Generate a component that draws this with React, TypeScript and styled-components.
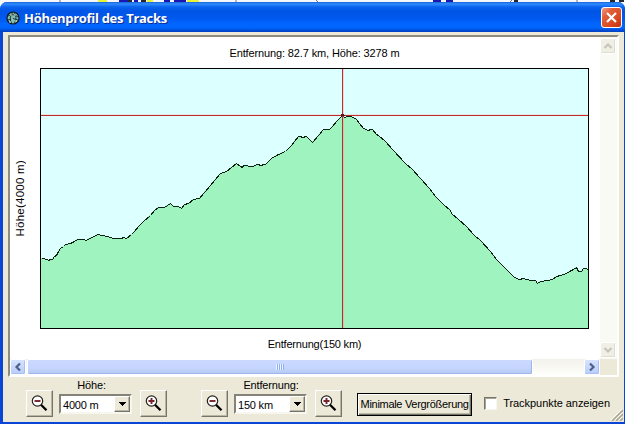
import React from "react";
import styled, { createGlobalStyle, css } from "styled-components";

const Global = createGlobalStyle`
  *, *::before, *::after { box-sizing: border-box; }
  body { margin: 0; overflow: hidden; background: #fff; }
  svg { display: block; flex: none; }
`;

const Screen = styled.div`
  width: 625px;
  height: 424px;
  display: flex;
  flex-direction: column;
  font: 11px/13px "Liberation Sans", Arial, sans-serif;
  color: #000;
`;

const Window = styled.div`
  flex: 1;
  display: flex;
  flex-direction: column;
  background: #0a45d8;
  border-radius: 7px 7px 0 0;
  overflow: hidden;
`;

const TitleBar = styled.header`
  height: 30px;
  flex: none;
  display: flex;
  align-items: center;
  padding: 1px 3px 0 6px;
  background: linear-gradient(#1b63d8 0, #2f8cff 2px, #0a62ee 5px, #0055e5 9px, #0058ee 16px, #0066ff 22px, #0065fb 26px, #0050dc 28px, #0040c0 30px);
`;

const Title = styled.h1`
  flex: 1;
  margin: 1px 0 0 4px;
  font: bold 13px/16px "Open Sans", "Noto Sans", sans-serif;
  letter-spacing: -0.3px;
  color: #fff;
  text-shadow: 1px 1px 0 #0a2f91;
`;

const CloseButton = styled.button`
  width: 21px;
  height: 21px;
  padding: 0;
  display: grid;
  place-items: center;
  border: 1px solid #fff;
  border-radius: 3px;
  background: linear-gradient(135deg, #f0a088 0, #e2603c 28%, #d9471f 70%, #b93410 100%);
`;

const Body = styled.main`
  flex: 1;
  display: flex;
  flex-direction: column;
  margin: 0 1px 2px 3px;
  padding: 3px 4px 0 5px;
  background: #ece9d8;
`;

const Frame = styled.section`
  width: 611px;
  height: 342px;
  flex: none;
  display: grid;
  grid-template: 322px 16px / 590px 17px;
  border: 2px solid;
  border-color: #8f8b7d #fff #fff #8f8b7d;
`;

const Plot = styled.div`
  display: grid;
  grid-template: 31px 261px 30px / 30px 549px;
  background: #fff;
`;

const Label = styled.span<{ $track?: number }>`
  white-space: pre;
  letter-spacing: ${(p) => p.$track ?? 0}px;
`;

const Caption = styled.div<{ $top: number }>`
  grid-column: 2;
  padding-top: ${(p) => p.$top}px;
  text-align: center;
`;

const AxisCell = styled.div`
  grid-column: 1;
  display: flex;
  justify-content: center;
  align-items: center;
  padding-right: 9px;
`;

const AxisLabel = styled(Label)`
  writing-mode: vertical-rl;
  transform: rotate(180deg);
  font-size: 11.5px;
`;

const VTrack = styled.div`
  display: flex;
  flex-direction: column;
  justify-content: space-between;
  padding: 1px 1px 1px 0;
  background: #fafaf5;
`;

const HTrack = styled.div`
  display: flex;
  background: linear-gradient(#f2f1ea, #fefefb);
`;

const ScrollButton = styled.button<{ $off?: boolean }>`
  width: 16px;
  height: 16px;
  flex: none;
  padding: 0;
  display: grid;
  place-items: center;
  border: 1px solid #fff;
  border-radius: 2px;
  ${(p) =>
    p.$off
      ? css`background: #f0efe5; box-shadow: inset -1px -1px #deddce; color: #c5c5b8;`
      : css`background: linear-gradient(#d5e1ff, #b9cdfb); box-shadow: inset -1px -1px #a8bff4; color: #4d6185;`}
`;

const Thumb = styled.div`
  width: 506px;
  height: 16px;
  margin-left: 1px;
  margin-right: auto;
  display: grid;
  place-items: center;
  border: 1px solid #fff;
  border-radius: 2px;
  background: linear-gradient(#cbd9ff, #c4d5fd 60%, #b3c8f5);
  box-shadow: inset -1px -1px #9fb6ec;
`;

const Grip = styled.div`
  width: 8px;
  height: 6px;
  background: repeating-linear-gradient(90deg, #eef4fe 0 1px, #8cb0f8 1px 2px);
`;

const Controls = styled.footer`
  flex: 1;
  display: flex;
  align-items: flex-start;
`;

const ZoomGroup = styled.div<{ $left: number }>`
  display: grid;
  grid-template: 13px 27px / 33px 81px 27px;
  margin-left: ${(p) => p.$left}px;
`;

const GroupName = styled.div<{ $inset: number }>`
  grid-column: 1 / -1;
  line-height: 16px;
  text-align: center;
  padding-right: ${(p) => p.$inset}px;
`;

const raised = css`
  border: 1px solid;
  border-color: #fff #77756a #77756a #fff;
  box-shadow: inset -1px -1px #b9b6a5;
  background: #ece9d8;
`;

const IconButton = styled.button`
  width: 27px;
  height: 27px;
  padding: 0;
  display: grid;
  place-items: center;
  ${raised}
`;

const Select = styled.div`
  width: 73px;
  height: 20px;
  align-self: end;
  margin-bottom: 3px;
  display: flex;
  align-items: center;
  padding-left: 2px;
  background: #fff;
  border: 2px solid;
  border-color: #85827a #f7f6ef #f7f6ef #85827a;
`;

const Value = styled(Label)`
  padding-top: 3px;
`;

const DropArrow = styled.span`
  width: 16px;
  height: 16px;
  margin-left: auto;
  display: grid;
  place-items: center;
  ${raised}
`;

const PushButton = styled.button`
  width: 117px;
  height: 23px;
  margin: 16px 0 0 15px;
  padding: 0;
  font: inherit;
  color: #000;
  border: 1px solid #000;
  background: #ece9d8;
  box-shadow: inset 1px 1px #fff, inset -1px -1px #77756a, inset -2px -2px #b9b6a5;
`;

const CheckLabel = styled.label`
  display: flex;
  align-items: center;
  gap: 6px;
  margin: 20px 0 0 12px;
`;

const CheckBox = styled.span`
  width: 13px;
  height: 13px;
  background: #fff;
  border: 1px solid;
  border-color: #77756a #f6f5ee #f6f5ee #77756a;
  box-shadow: inset 1px 1px #a9a698;
`;

const Resize = styled.svg`
  align-self: flex-end;
  margin: 0 -3px 1px auto;
`;

const profile = `41,258 44,258 45,259 47,259 48,260 50,259 52,259 54,256 56,255 58,251 60,248 63,246 65,244 70,243 74,241 77,239 83,239 86,240 91,237 94,236 97,234 102,235 107,236 113,238 121,238 123,237 126,238 131,234 134,231 138,226 143,221 150,215 154,210 158,207 164,207 167,205 170,203 173,206 178,206 181,208 184,204 188,203 193,199 199,198 204,192 210,185 215,179 220,173 226,171 231,167 236,163 240,166 242,167 243,165 252,166 257,164 261,165 263,164 265,164 271,158 278,154 285,151 291,145 294,141 298,136 300,136 302,137 306,136 309,139 312,142 318,135 323,129 329,129 332,126 336,121 342,115 344,117 347,116 351,116 356,119 359,123 363,128 368,130 370,129 372,129 376,134 378,135 385,141 392,149 405,163 412,169 420,178 429,188 435,196 443,204 450,210 451,213 458,219 466,226 474,235 480,240 490,251 496,259 502,265 510,273 514,277 519,279 523,278 530,280 535,280 537,283 540,281 547,280 552,279 556,276 560,275 566,273 569,271 571,270 573,269 576,267 578,271 581,271 583,268 586,268 588,270`;

const ElevationChart = () => (
  <svg width="549" height="261" viewBox="40 68 549 261" shapeRendering="crispEdges">
    <rect x="40" y="68" width="549" height="261" fill="#dcffff" />
    <polygon points={`40,258 ${profile} 588,328 40,328`} fill="#9ff3bf" />
    <polyline points={profile} transform="translate(0.5 0.5)" fill="none" stroke="#092010" />
    <rect x="41" y="114" width="547" height="1" fill="#ff8070" fillOpacity="0.18" />
    <rect x="343" y="69" width="1" height="259" fill="#ff8070" fillOpacity="0.3" />
    <rect x="41" y="115" width="547" height="1" fill="#c42a2a" />
    <rect x="342" y="69" width="1" height="259" fill="#bd2c2c" />
    <path d="M341 114h3v1h1v1h-4z" fill="#54151a" />
    <rect x="40.5" y="68.5" width="548" height="260" fill="none" stroke="#000" />
  </svg>
);

const Magnifier = ({ plus }: { plus?: boolean }) => (
  <svg width="17" height="17" viewBox="0 0 17 17">
    <circle cx="6.5" cy="6" r="5.2" fill="#fff" stroke="#24201e" strokeWidth="1.2" />
    <path d="M10 9.8L15.5 15.3" stroke="#000" strokeWidth="2.3" />
    <path d={plus ? "M3.5 6h6M6.5 3v6" : "M3.5 6h6"} stroke="#782128" strokeWidth="1.9" />
  </svg>
);

const Chevron = ({ d }: { d: string }) => (
  <svg width="10" height="10" viewBox="0 0 10 10">
    <path d={d} fill="none" stroke="currentColor" strokeWidth="2.2" />
  </svg>
);

const GlobeIcon = () => (
  <svg width="14" height="14" viewBox="0 0 14 14">
    <circle cx="7" cy="7" r="6" fill="#82bdb4" stroke="#101718" strokeWidth="1.2" />
    <path d="M2 5Q7 2 12 6M2 9Q7 6 12 9M7 1Q2 7 6 13M8 1Q12 7 8 13" fill="none" stroke="#122b2e" strokeWidth="0.9" />
    <path d="M4 4h2M9 10h2M5 8h2M8 4h2M3 11h2" stroke="#d6efe4" />
  </svg>
);

const MapStrip = () => (
  <svg width="625" height="2" viewBox="0 0 625 2">
    <rect width="625" height="2" fill="#f5f7fb" />
    <path d="M98 1h9M147 1h6M187 1h12" stroke="#eaf334" strokeWidth="2" />
    <path d="M119 1h9M134 1h4M164 1h6M174 1h12M433 1h8M446 1h7" stroke="#1717b5" strokeWidth="2" />
    <path d="M128 1h4M141 1h5M514 1h4M610 1h5M619 1h5" stroke="#222831" strokeWidth="2" />
    <path d="M60 0v2M236 0v2M316 0l2 2M510 2l2-2M577 0v2" stroke="#617990" />
  </svg>
);

interface ZoomControlProps {
  name: string;
  value: string;
  left: number;
  nameInset: number;
}

function ZoomControl({ name, value, left, nameInset }: ZoomControlProps) {
  return (
    <ZoomGroup $left={left}>
      <GroupName $inset={nameInset}><Label $track={-0.15}>{name}</Label></GroupName>
      <IconButton aria-label={`${name} verkleinern`}><Magnifier /></IconButton>
      <Select>
        <Value $track={-0.2}>{value}</Value>
        <DropArrow>
          <svg width="7" height="4" viewBox="0 0 7 4" shapeRendering="crispEdges"><path d="M0 0h7L3.5 4z" /></svg>
        </DropArrow>
      </Select>
      <IconButton aria-label={`${name} vergrößern`}><Magnifier plus /></IconButton>
    </ZoomGroup>
  );
}

export default function App() {
  return (
    <Screen>
      <Global />
      <MapStrip />
      <Window>
        <TitleBar>
          <GlobeIcon />
          <Title>Höhenprofil des Tracks</Title>
          <CloseButton aria-label="Schließen">
            <svg width="13" height="13" viewBox="0 0 13 13"><path d="M2 2l9 9M11 2l-9 9" stroke="#fff" strokeWidth="2.2" /></svg>
          </CloseButton>
        </TitleBar>
        <Body>
          <Frame>
            <Plot>
              <Caption $top={10}><Label $track={-0.13}>Entfernung: 82.7 km, Höhe: 3278 m</Label></Caption>
              <AxisCell><AxisLabel $track={0.25}>Höhe(4000 m)</AxisLabel></AxisCell>
              <ElevationChart />
              <Caption $top={9}><Label $track={-0.2}>Entfernung(150 km)</Label></Caption>
            </Plot>
            <VTrack>
              <ScrollButton $off aria-label="Nach oben"><Chevron d="M1.5 7L5 3.5 8.5 7" /></ScrollButton>
              <ScrollButton $off aria-label="Nach unten"><Chevron d="M1.5 3L5 6.5 8.5 3" /></ScrollButton>
            </VTrack>
            <HTrack>
              <ScrollButton aria-label="Nach links"><Chevron d="M7 1.5L3.5 5 7 8.5" /></ScrollButton>
              <Thumb><Grip /></Thumb>
              <ScrollButton aria-label="Nach rechts"><Chevron d="M3 1.5L6.5 5 3 8.5" /></ScrollButton>
            </HTrack>
          </Frame>
          <Controls>
            <ZoomControl name="Höhe:" value="4000 m" left={18} nameInset={10} />
            <ZoomControl name="Entfernung:" value="150 km" left={34} nameInset={1} />
            <PushButton><Label $track={-0.3}>Minimale Vergrößerung</Label></PushButton>
            <CheckLabel><CheckBox /><Label $track={-0.05}>Trackpunkte anzeigen</Label></CheckLabel>
            <Resize width="13" height="13" viewBox="0 0 13 13">
              <path d="M2 13L13 2M6 13L13 6M10 13L13 10" stroke="#aaa794" strokeWidth="1.6" />
              <path d="M1 12L12 1M5 12L12 5M9 12L12 9" stroke="#fff" />
            </Resize>
          </Controls>
        </Body>
      </Window>
    </Screen>
  );
}
